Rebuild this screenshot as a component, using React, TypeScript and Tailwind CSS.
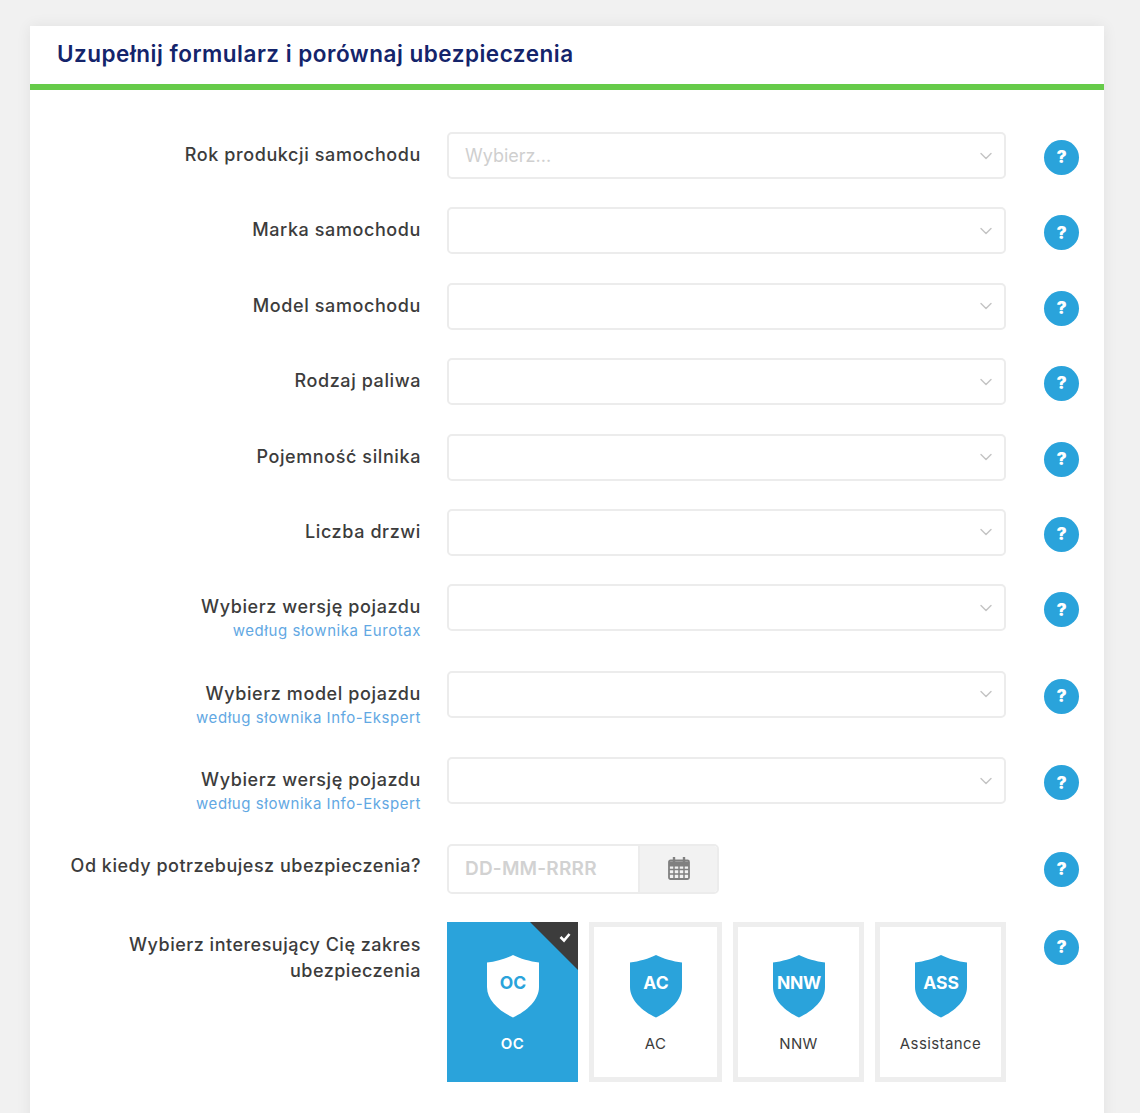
import { ChevronDown } from "lucide-react";

const FONT = "font-['Inter','Liberation_Sans',sans-serif]";

type Row = { label: string; sub?: string; placeholder?: string };

const rows: Row[] = [
  { label: "Rok produkcji samochodu", placeholder: "Wybierz..." },
  { label: "Marka samochodu" },
  { label: "Model samochodu" },
  { label: "Rodzaj paliwa" },
  { label: "Pojemność silnika" },
  { label: "Liczba drzwi" },
  { label: "Wybierz wersję pojazdu", sub: "według słownika Eurotax" },
  { label: "Wybierz model pojazdu", sub: "według słownika Info-Ekspert" },
  { label: "Wybierz wersję pojazdu", sub: "według słownika Info-Ekspert" },
];

const tiles = [
  { short: "OC", name: "OC", active: true, width: "w-[131px]" },
  { short: "AC", name: "AC", active: false, width: "w-[133px]" },
  { short: "NNW", name: "NNW", active: false, width: "w-[131px]" },
  { short: "ASS", name: "Assistance", active: false, width: "w-[131px]" },
];

function Help() {
  return (
    <div className="flex h-[35px] w-[35px] shrink-0 items-center justify-center rounded-full bg-[#2aa3db] pt-[1px] text-[17px] font-black text-white">
      ?
    </div>
  );
}

function Shield({ text, active }: { text: string; active: boolean }) {
  const fill = active ? "#ffffff" : "#2aa3db";
  const ink = active ? "#2aa3db" : "#ffffff";
  return (
    <svg width="54" height="64" viewBox="0 0 54 64">
      <path
        d="M27 1C34 4.5 44 7.5 53 8.5V33C53 46 41 57 27 63.500C13 57 1 46 1 33V8.500C10 7.500 20 4.500 27 1Z"
        fill={fill}
      />
      <text x="27" y="35" textAnchor="middle" fontSize={17.500} fontWeight="700" letterSpacing={text === "NNW" ? "-0.3" : "0"} fill={ink}>
        {text}
      </text>
    </svg>
  );
}

function Tile({ short, name, active, width }: { short: string; name: string; active: boolean; width: string }) {
  return (
    <div
      className={`relative flex h-[160px] ${width} flex-col items-center overflow-hidden ${
        active ? "bg-[#2aa3db] pt-[32px] text-white" : "border-[5px] border-[#eeeeee] bg-white pt-[27px] text-[#3c3c3c]"
      }`}
    >
      {active && (
        <svg className="absolute right-0 top-0" width="48" height="48" viewBox="0 0 48 48">
          <path d="M0 0H48V48Z" fill="#3c3c3c" />
          <path d="M30.500 15L34 18.500L39.500 12" fill="none" stroke="#fff" strokeWidth="2.600" />
        </svg>
      )}
      <Shield text={short} active={active} />
      <span className={`mt-[16px] text-[15px] leading-[20px] tracking-[0.4px] ${active ? "font-semibold" : "font-normal"}`}>{name}</span>
    </div>
  );
}

export default function App() {
  return (
    <div className={`h-[1113px] overflow-hidden bg-[#f1f1f1] pl-[30px] pr-[36px] pt-[26px] ${FONT}`}>
      <div className="h-[1100px] bg-white shadow-[0_0_14px_rgba(0,0,0,0.07)]">
        <div className="flex h-[58px] items-center pb-[2px] pl-[27px]">
          <h1 className="text-[22.500px] font-semibold tracking-[0.5px] text-[#14246b]">
            Uzupełnij formularz i porównaj ubezpieczenia
          </h1>
        </div>
        <div className="h-[6px] bg-[#66cb4a]" />

        <div className="pt-[42px]">
          {rows.map((row, i) => (
            <div key={i} className={`flex items-start ${row.sub ? "h-[86.500px]" : "h-[75.400px]"}`}>
              <div className="w-[391px] shrink-0 pt-[11px] text-right">
                <div className="text-[18px] font-medium leading-[24px] tracking-[0.6px] text-[#3c3c3c]">{row.label}</div>
                {row.sub && <div className="mt-[2px] text-[15px] leading-[20px] tracking-[0.55px] text-[#62a8e3]">{row.sub}</div>}
              </div>
              <div className="ml-[26px] flex h-[47px] w-[559px] shrink-0 items-center justify-between rounded-[5px] border-2 border-[#ececec] bg-white pl-[16px] pr-[8.500px] text-[18px] text-[#cfcfcf]">
                <span>{row.placeholder}</span>
                <ChevronDown size={20} strokeWidth={1.7} className="text-[#c4c4c4]" />
              </div>
              <div className="ml-[38px] pt-[8px]">
                <Help />
              </div>
            </div>
          ))}

          <div className="flex h-[78.100px] items-start">
            <div className="w-[391px] shrink-0 pt-[10px] text-right text-[18px] font-medium leading-[24px] tracking-[0.5px] text-[#3c3c3c]">
              Od kiedy potrzebujesz ubezpieczenia?
            </div>
            <div className="ml-[26px] flex h-[50px] w-[272px] shrink-0 overflow-hidden rounded-[5px] border-2 border-[#ececec] bg-white">
              <div className="flex w-[191px] items-center border-r-2 border-[#ececec] pl-[16px] pt-[1px] text-[19px] font-semibold tracking-[0.2px] text-[#d2d2d2]">
                DD-MM-RRRR
              </div>
              <div className="flex flex-1 items-center justify-center bg-[#f2f2f2]">
                <svg width="22" height="23" viewBox="0 0 22 23" fill="none" stroke="#808080">
                  <rect x="1" y="3.500" width="20" height="18.500" rx="1.500" strokeWidth="1.800" fill="#f2f2f2" />
                  <path d="M1 7H21" strokeWidth="5" />
                  <path d="M1 12.500H21M1 17H21M6 9V22M11 9V22M16 9V22" strokeWidth="1.500" />
                  <path d="M6 0.500V5M16 0.500V5" strokeWidth="2.400" strokeLinecap="round" />
                </svg>
              </div>
            </div>
            <div className="ml-[325px] pt-[8px]">
              <Help />
            </div>
          </div>

          <div className="flex items-start">
            <div className="w-[391px] shrink-0 pl-[80px] pt-[10px] text-right text-[18px] font-medium leading-[26px] tracking-[0.5px] text-[#3c3c3c]">
              Wybierz interesujący Cię zakres ubezpieczenia
            </div>
            <div className="ml-[26px] flex w-[559px] shrink-0 justify-between">
              {tiles.map((t) => (
                <Tile key={t.short} {...t} />
              ))}
            </div>
            <div className="ml-[38px] pt-[8px]">
              <Help />
            </div>
          </div>
        </div>
      </div>
    </div>
  );
}
